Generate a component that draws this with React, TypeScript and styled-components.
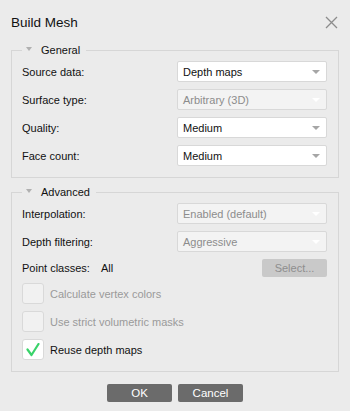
import React from "react";
import styled, { createGlobalStyle } from "styled-components";

const GlobalStyle = createGlobalStyle`
  html, body {
    margin: 0;
    padding: 0;
    background: #ebebeb;
  }
  body {
    font-family: "Liberation Sans", Arial, sans-serif;
    font-size: 11px;
    color: #111;
  }
`;

const Dialog = styled.div`
  width: 350px;
  height: 411px;
  background: #ebebeb;
  display: flex;
  flex-direction: column;
  box-sizing: border-box;
`;

const Header = styled.div`
  height: 43px;
  display: flex;
  align-items: center;
  justify-content: space-between;
  padding: 0 12px 0 11px;
  box-sizing: border-box;
`;

const Title = styled.div`
  font-size: 13.5px;
  color: #111;
  margin-top: 1px;
`;

const CloseButton = styled.div`
  width: 13px;
  height: 13px;
  display: flex;
  margin-top: 1px;
`;

const Group = styled.fieldset`
  margin: 0 11px;
  padding: 4px 11px 11px 10px;
  border: 1px solid #d6d6d6;
  min-width: 0;
`;

const GroupTitle = styled.legend`
  display: flex;
  align-items: center;
  gap: 9px;
  height: 14px;
  line-height: 14px;
  margin-left: 0;
  padding: 0 6px 0 4px;
  color: #111;
`;

const Caret = styled.span`
  width: 0;
  height: 0;
  border-left: 3.5px solid transparent;
  border-right: 3.5px solid transparent;
  border-top: 4px solid #b0b0b0;
  margin-top: -2px;
`;

const Form = styled.div`
  display: grid;
  grid-template-columns: 1fr 150px;
  row-gap: 7px;
  align-items: center;
`;

const Label = styled.div`
  color: #111;
`;

const Combo = styled.div<{ $disabled?: boolean }>`
  height: 21px;
  box-sizing: border-box;
  border: 1px solid #d8d8d8;
  border-radius: 2px;
  background: ${(p) => (p.$disabled ? "#f3f3f3" : "#ffffff")};
  color: ${(p) => (p.$disabled ? "#8c8c8c" : "#111")};
  display: flex;
  align-items: center;
  justify-content: space-between;
  padding: 0 6px 0 5px;
`;

const ComboArrow = styled.span<{ $disabled?: boolean }>`
  width: 0;
  height: 0;
  border-left: 4px solid transparent;
  border-right: 4px solid transparent;
  border-top: 4px solid ${(p) => (p.$disabled ? "#ffffff" : "#a6a6a6")};
`;

const PointRow = styled.div`
  grid-column: 1 / -1;
  display: flex;
  align-items: center;
  justify-content: space-between;
  margin-bottom: -1px;
`;

const PointLabel = styled.div`
  display: flex;
  gap: 11px;
`;

const SmallButton = styled.div`
  width: 65px;
  height: 18px;
  box-sizing: border-box;
  background: #c9c9c9;
  color: #8e8e8e;
  border-radius: 2px;
  display: flex;
  align-items: center;
  justify-content: center;
`;

const CheckRow = styled.div<{ $disabled?: boolean }>`
  grid-column: 1 / -1;
  display: flex;
  align-items: center;
  gap: 6px;
  color: ${(p) => (p.$disabled ? "#9a9a9a" : "#111")};
`;

const Box = styled.div<{ $disabled?: boolean }>`
  width: 22px;
  height: 21px;
  box-sizing: border-box;
  border: 1px solid #d9d9d9;
  border-radius: 3px;
  background: ${(p) => (p.$disabled ? "#f1f1f1" : "#ffffff")};
  display: flex;
  align-items: center;
  justify-content: center;
`;

const Spacer = styled.div`
  height: 7px;
`;

const Footer = styled.div`
  display: flex;
  justify-content: center;
  gap: 6px;
  margin-top: 12px;
`;

const Button = styled.div`
  width: 65px;
  height: 18px;
  background: #6b6b6b;
  color: #ffffff;
  border-radius: 2px;
  display: flex;
  align-items: center;
  justify-content: center;
  font-size: 11.5px;
`;

const Select = ({ value, disabled }: { value: string; disabled?: boolean }) => (
  <Combo $disabled={disabled}>
    <span>{value}</span>
    <ComboArrow $disabled={disabled} />
  </Combo>
);

const Check = ({ label, checked, disabled }: { label: string; checked?: boolean; disabled?: boolean }) => (
  <CheckRow $disabled={disabled}>
    <Box $disabled={disabled}>
      {checked && (
        <svg width="14" height="14" viewBox="0 0 14 14">
          <path d="M1.5 6.5 L5.5 12 L12.5 1" fill="none" stroke="#39d36a" strokeWidth="2.2" strokeLinecap="round" strokeLinejoin="round" />
        </svg>
      )}
    </Box>
    <span>{label}</span>
  </CheckRow>
);

const App = () => (
  <Dialog>
    <GlobalStyle />
    <Header>
      <Title>Build Mesh</Title>
      <CloseButton>
        <svg width="13" height="13" viewBox="0 0 13 13">
          <path d="M1 1 L12 12 M12 1 L1 12" stroke="#8c8c8c" strokeWidth="1.3" />
        </svg>
      </CloseButton>
    </Header>

    <Group>
      <GroupTitle>
        <Caret />
        General
      </GroupTitle>
      <Form>
        <Label>Source data:</Label>
        <Select value="Depth maps" />
        <Label>Surface type:</Label>
        <Select value="Arbitrary (3D)" disabled />
        <Label>Quality:</Label>
        <Select value="Medium" />
        <Label>Face count:</Label>
        <Select value="Medium" />
      </Form>
    </Group>

    <Spacer />

    <Group>
      <GroupTitle>
        <Caret />
        Advanced
      </GroupTitle>
      <Form>
        <Label>Interpolation:</Label>
        <Select value="Enabled (default)" disabled />
        <Label>Depth filtering:</Label>
        <Select value="Aggressive" disabled />
        <PointRow>
          <PointLabel>
            <span>Point classes:</span>
            <span>All</span>
          </PointLabel>
          <SmallButton>Select...</SmallButton>
        </PointRow>
        <Check label="Calculate vertex colors" disabled />
        <Check label="Use strict volumetric masks" disabled />
        <Check label="Reuse depth maps" checked />
      </Form>
    </Group>

    <Footer>
      <Button>OK</Button>
      <Button>Cancel</Button>
    </Footer>
  </Dialog>
);

export default App;
